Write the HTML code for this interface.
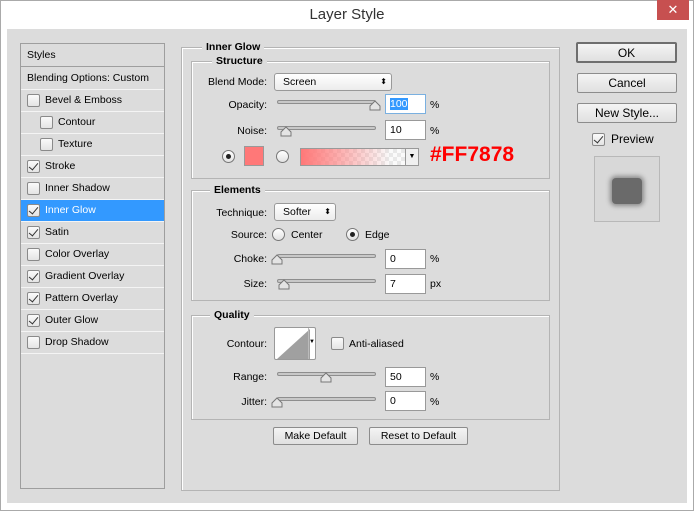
<!DOCTYPE html><html><head><style>
*{margin:0;padding:0;box-sizing:border-box}
body{width:694px;height:511px;background:#fff;font-family:"Liberation Sans",sans-serif;font-size:10.5px;color:#000;position:relative;overflow:hidden}
.a{position:absolute}
.grp{position:absolute;border:1px solid #b4b4b4;box-shadow:1px 1px 0 #fff inset}
.gt{position:absolute;top:-7px;background:#dcdcdc;font-weight:bold;padding:0 4px;font-size:10.5px}
.row{position:absolute;left:0;width:143px;height:22px;border-bottom:1px solid #f4f4f4;line-height:21px;padding-left:24px}
.cb{position:absolute;width:13px;height:13px;border:1px solid #8a8a8a;background:linear-gradient(#fafafa,#e4e4e4);border-radius:2px}
.cb.k::after{content:"";position:absolute;left:3px;top:0px;width:4px;height:8px;border:solid #333;border-width:0 1.5px 1.5px 0;transform:rotate(40deg)}
.lb{position:absolute;text-align:right;width:120px}
.tr{position:absolute;height:4px;width:99px;border-radius:2px;background:#c8c8c8;border:1px solid #8e8e8e}
.in{position:absolute;width:41px;height:20px;background:#fff;border:1px solid #999;padding-left:4px;line-height:18px}
.btn{position:absolute;border:1px solid #8c8c8c;border-radius:2px;background:linear-gradient(#f4f4f4,#e0e0e0);text-align:center}
.rd{position:absolute;width:13px;height:13px;border-radius:50%;border:1px solid #777;background:linear-gradient(#fff,#e2e2e2)}
.rd.on::after{content:"";position:absolute;left:3px;top:3px;width:5px;height:5px;border-radius:50%;background:#222}
.sel{position:absolute;border:1px solid #999;border-radius:3px;background:linear-gradient(#fff,#ececec);padding-left:8px;line-height:16px}
</style></head><body>
<div class="a" style="left:0;top:0;width:694px;height:511px;border:1px solid #aaa"></div>
<div class="a" style="left:0;top:6px;width:694px;text-align:center;font-size:15px;color:#333">Layer Style</div>
<div class="a" style="left:657px;top:0;width:32px;height:20px;background:#c75050;color:#fff;text-align:center;font-size:13px;line-height:19px">✕</div>
<div class="a" style="left:7px;top:29px;width:680px;height:474px;background:#dcdcdc"></div>

<div class="a" style="left:20px;top:43px;width:145px;height:446px;border:1px solid #9e9e9e">
<div class="row" style="top:0;padding-left:6px;height:23px;border-bottom:1px solid #9e9e9e;line-height:22px">Styles</div>
<div class="row" style="top:24px;padding-left:6px;line-height:21px">Blending Options: Custom</div>
<div class="row" style="top:46px"><span class="cb" style="left:6px;top:4px"></span>Bevel &amp; Emboss</div>
<div class="row" style="top:68px;padding-left:37px"><span class="cb" style="left:19px;top:4px"></span>Contour</div>
<div class="row" style="top:90px;padding-left:37px"><span class="cb" style="left:19px;top:4px"></span>Texture</div>
<div class="row" style="top:112px"><span class="cb k" style="left:6px;top:4px"></span>Stroke</div>
<div class="row" style="top:134px"><span class="cb" style="left:6px;top:4px"></span>Inner Shadow</div>
<div class="row" style="top:156px;background:#3399ff;color:#fff"><span class="cb k" style="left:6px;top:4px"></span>Inner Glow</div>
<div class="row" style="top:178px"><span class="cb k" style="left:6px;top:4px"></span>Satin</div>
<div class="row" style="top:200px"><span class="cb" style="left:6px;top:4px"></span>Color Overlay</div>
<div class="row" style="top:222px"><span class="cb k" style="left:6px;top:4px"></span>Gradient Overlay</div>
<div class="row" style="top:244px"><span class="cb k" style="left:6px;top:4px"></span>Pattern Overlay</div>
<div class="row" style="top:266px"><span class="cb k" style="left:6px;top:4px"></span>Outer Glow</div>
<div class="row" style="top:288px"><span class="cb" style="left:6px;top:4px"></span>Drop Shadow</div>
</div>

<div class="grp" style="left:181px;top:47px;width:379px;height:444px"><div class="gt" style="left:20px">Inner Glow</div></div>
<div class="grp" style="left:191px;top:61px;width:359px;height:118px"><div class="gt" style="left:20px">Structure</div></div>
<div class="grp" style="left:191px;top:190px;width:359px;height:111px"><div class="gt" style="left:18px">Elements</div></div>
<div class="grp" style="left:191px;top:315px;width:359px;height:105px"><div class="gt" style="left:18px">Quality</div></div>

<div class="lb" style="left:147px;top:76px">Blend Mode:</div>
<div class="sel" style="left:274px;top:73px;width:118px;height:18px">Screen<span class="a" style="right:4px;top:0;font-size:8px">⬍</span></div>
<div class="lb" style="left:147px;top:99px">Opacity:</div>
<div class="lb" style="left:147px;top:125px">Noise:</div>
<div class="rd on" style="left:222px;top:150px"></div>
<div class="a" style="left:244px;top:146px;width:20px;height:20px;background:#ff7878;border:1px solid #999"></div>
<div class="rd" style="left:276px;top:150px"></div>
<div class="a" style="left:300px;top:148px;width:119px;height:18px;border:1px solid #999;background:repeating-conic-gradient(#e8e8e8 0 25%,#fafafa 0 50%) 0 0/8px 8px"><div class="a" style="left:0;top:0;width:105px;height:16px;background:linear-gradient(90deg,#ff7878,rgba(255,120,120,.6) 35%,rgba(255,120,120,0) 85%)"></div><div class="a" style="right:0;top:0;width:13px;height:16px;background:#f0f0f0;border-left:1px solid #999;font-size:7px;text-align:center;line-height:16px">▼</div></div>
<div class="a" style="left:430px;top:143px;color:#ff0000;font-weight:bold;font-size:21px">#FF7878</div>

<div class="lb" style="left:147px;top:207px">Technique:</div>
<div class="sel" style="left:274px;top:203px;width:62px;height:18px">Softer<span class="a" style="right:4px;top:0;font-size:8px">⬍</span></div>
<div class="lb" style="left:147px;top:229px">Source:</div>
<div class="rd" style="left:272px;top:228px"></div><div class="a" style="left:291px;top:229px">Center</div>
<div class="rd on" style="left:346px;top:228px"></div><div class="a" style="left:365px;top:229px">Edge</div>
<div class="lb" style="left:147px;top:253px">Choke:</div>
<div class="lb" style="left:147px;top:278px">Size:</div>

<div class="lb" style="left:147px;top:338px">Contour:</div>
<div class="a" style="left:274px;top:327px;width:42px;height:33px;border:1px solid #999;border-radius:2px;background:#fff"><svg width="34" height="31" class="a" style="left:1px;top:0"><polygon points="1,31 34,1 34,31" fill="#a0a0a0"/></svg><div class="a" style="right:0;top:0;width:7px;height:31px;border-left:1px solid #bbb;font-size:6px;text-align:center;line-height:28px">▼</div></div>
<div class="cb" style="left:331px;top:337px"></div><div class="a" style="left:349px;top:338px">Anti-aliased</div>
<div class="lb" style="left:147px;top:371px">Range:</div>
<div class="lb" style="left:147px;top:396px">Jitter:</div>

<div class="tr" style="left:277px;top:100px"></div><div class="tr" style="left:277px;top:126px"></div>
<div class="tr" style="left:277px;top:254px"></div><div class="tr" style="left:277px;top:279px"></div>
<div class="tr" style="left:277px;top:372px"></div><div class="tr" style="left:277px;top:397px"></div>
<svg class="a" style="left:0;top:0" width="694" height="511">
<g fill="#e4e4e4" stroke="#777">
<path d="M370 110v-4l5-5 5 5v4z"/><path d="M281 136v-4l5-5 5 5v4z"/>
<path d="M272 264v-4l5-5 5 5v4z"/><path d="M279 289v-4l5-5 5 5v4z"/>
<path d="M321 382v-4l5-5 5 5v4z"/><path d="M272 407v-4l5-5 5 5v4z"/>
</g></svg>
<div class="in" style="left:385px;top:94px;border-color:#7ab0e0"><span style="background:#3399ff;color:#fff">100</span></div><div class="a" style="left:430px;top:99px">%</div>
<div class="in" style="left:385px;top:120px">10</div><div class="a" style="left:430px;top:125px">%</div>
<div class="in" style="left:385px;top:249px">0</div><div class="a" style="left:430px;top:253px">%</div>
<div class="in" style="left:385px;top:274px">7</div><div class="a" style="left:430px;top:278px">px</div>
<div class="in" style="left:385px;top:367px">50</div><div class="a" style="left:430px;top:371px">%</div>
<div class="in" style="left:385px;top:391px">0</div><div class="a" style="left:430px;top:396px">%</div>

<div class="btn" style="left:273px;top:427px;width:85px;height:18px;line-height:16px">Make Default</div>
<div class="btn" style="left:369px;top:427px;width:99px;height:18px;line-height:16px">Reset to Default</div>

<div class="btn" style="left:576px;top:42px;width:101px;height:21px;line-height:18px;font-size:12px;border:2px solid #6e6e6e">OK</div>
<div class="btn" style="left:577px;top:73px;width:100px;height:20px;line-height:18px;font-size:12px">Cancel</div>
<div class="btn" style="left:577px;top:103px;width:100px;height:20px;line-height:18px;font-size:12px">New Style...</div>
<div class="cb k" style="left:592px;top:133px"></div><div class="a" style="left:611px;top:132px;font-size:12px">Preview</div>
<div class="a" style="left:594px;top:156px;width:66px;height:66px;border:1px solid #b8b8b8;background:#d8d8d8"><div class="a" style="left:17px;top:21px;width:30px;height:26px;background:#6a6a6a;border-radius:4px;box-shadow:0 0 5px 2px #8a8a8a"></div></div>
</body></html>
